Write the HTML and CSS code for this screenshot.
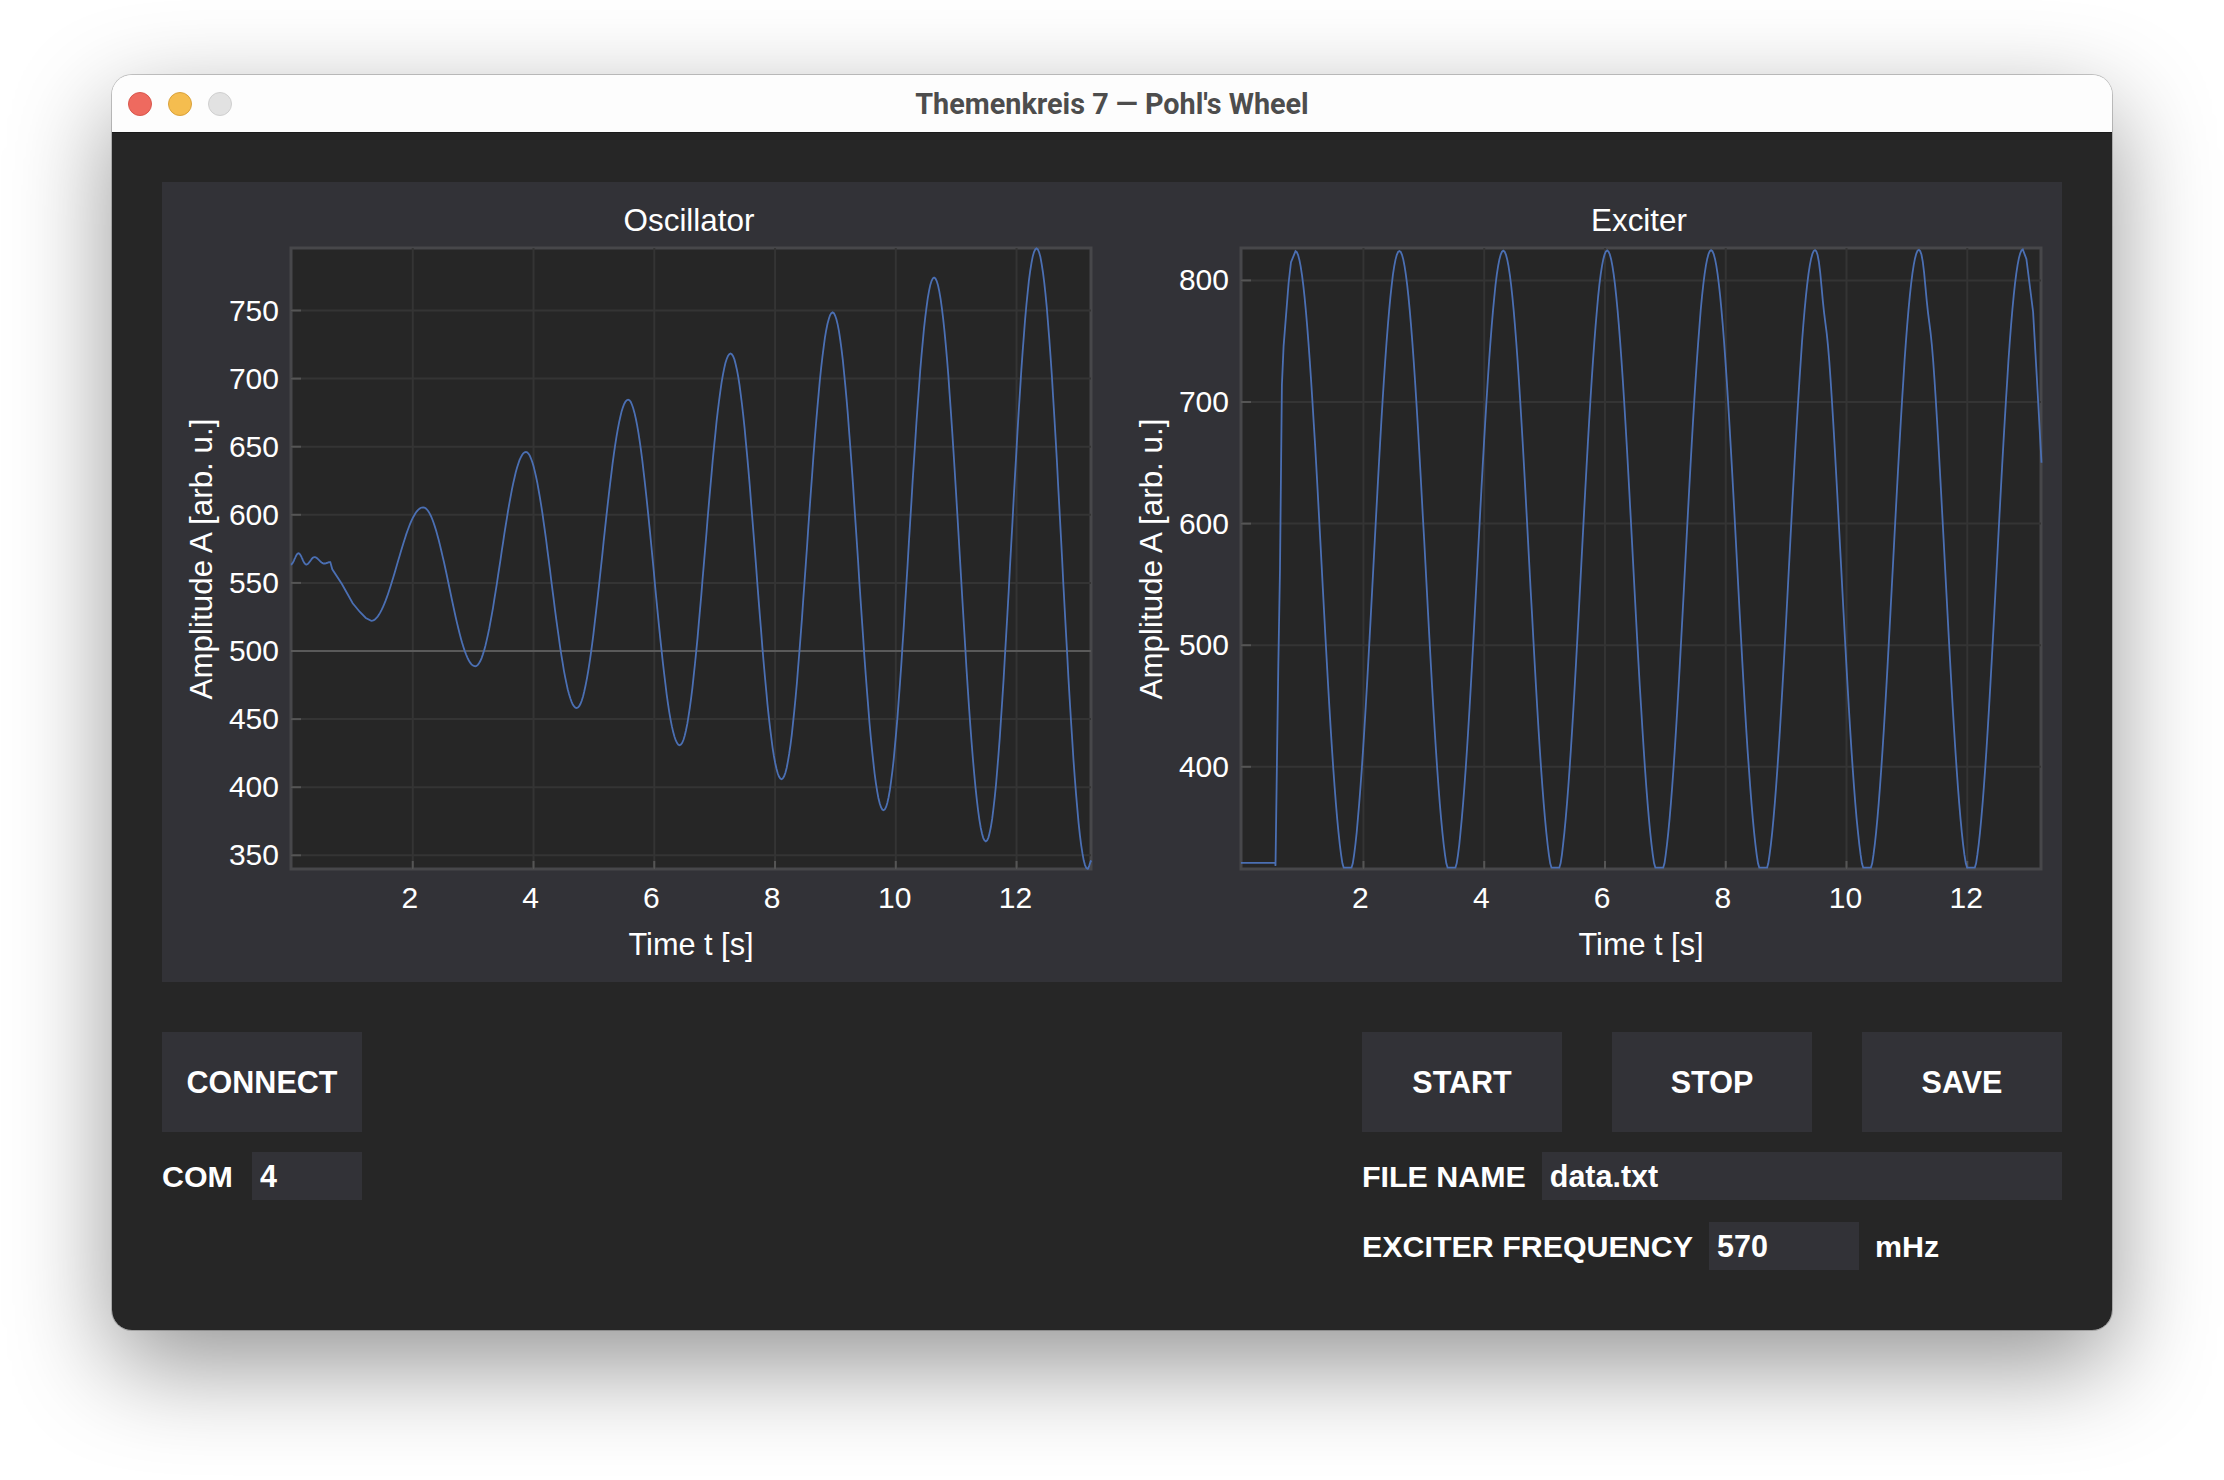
FILE: index.html
```html
<!DOCTYPE html>
<html lang="en">
<head>
  <meta charset="UTF-8">
  <title>Themenkreis 7 — Pohl's Wheel</title>
  <link rel="stylesheet" href="styles.css">
</head>
<body>
  <div class="window">
    <div class="titlebar">
      <div class="lights">
        <span class="light light-close"></span>
        <span class="light light-min"></span>
        <span class="light light-max"></span>
      </div>
      <div class="title">Themenkreis 7 — Pohl's Wheel</div>
    </div>
    <div class="content">
      <div class="panel">
        <svg class="chart" id="oscillator" width="950" height="800"></svg>
        <svg class="chart" id="exciter" width="950" height="800"></svg>
      </div>
      <div class="controls">
        <div class="col-left">
          <button class="btn">CONNECT</button>
          <div class="row">
            <label class="label">COM</label>
            <input class="field field-com" type="text" value="4">
          </div>
        </div>
        <div class="col-right">
          <div class="buttons">
            <button class="btn">START</button>
            <button class="btn">STOP</button>
            <button class="btn">SAVE</button>
          </div>
          <div class="row">
            <label class="label">FILE NAME</label>
            <input class="field field-file" type="text" value="data.txt">
          </div>
          <div class="row">
            <label class="label">EXCITER FREQUENCY</label>
            <input class="field field-freq" type="text" value="570">
            <span class="label">mHz</span>
          </div>
        </div>
      </div>
    </div>
  </div>
  <script src="chart.js"></script>
</body>
</html>
```

FILE: styles.css
```css
body {
  margin: 0;
  width: 2224px;
  height: 1480px;
  overflow: hidden;
  background: #fff;
  font-family: 'Liberation Sans', Arial, sans-serif;
  color: #fff;
}
.window {
  width: 2000px;
  height: 1255px;
  margin: 75px 0 0 112px;
  border-radius: 20px;
  overflow: hidden;
  display: flex;
  flex-direction: column;
  box-shadow: 0 0 0 1px rgba(0, 0, 0, 0.2), 0 35px 100px rgba(0, 0, 0, 0.42);
}
.titlebar {
  position: relative;
  height: 57px;
  background: #fdfdfd;
  border-bottom: 1px solid #1a1a1a;
  display: flex;
  align-items: center;
  justify-content: center;
  flex-shrink: 0;
}
.lights {
  position: absolute;
  left: 16px;
  top: 17px;
  display: flex;
  gap: 16px;
}
.light {
  width: 24px;
  height: 24px;
  border-radius: 50%;
  box-sizing: border-box;
  border: 1px solid;
}
.light-close {
  background: #ee6a5f;
  border-color: #d8574d;
}
.light-min {
  background: #f5bd4f;
  border-color: #d9a23c;
}
.light-max {
  background: #e2e2e2;
  border-color: #cfcfcf;
}
.title {
  font-family: Roboto, sans-serif;
  font-size: 28.8px;
  font-weight: 700;
  color: #4d4d4d;
}
.content {
  flex: 1;
  background: #262626;
  padding: 49px 50px 0;
}
.panel {
  display: flex;
  background: #323237;
  height: 800px;
}
.chart {
  display: block;
}
.chart text {
  fill: #fff;
  font-size: 30px;
}
.chart .chart-title,
.chart .axis-y {
  font-size: 31.4px;
}
.chart .axis-x {
  font-size: 30.7px;
}
.controls {
  display: flex;
  justify-content: space-between;
  margin-top: 50px;
}
.col-left {
  width: 200px;
}
.col-right {
  width: 700px;
}
.buttons {
  display: flex;
  justify-content: space-between;
}
.btn {
  width: 200px;
  height: 100px;
  padding: 0;
  border: none;
  background: #323237;
  color: #fff;
  font-family: inherit;
  font-size: 30.5px;
  font-weight: bold;
}
.row {
  display: flex;
  align-items: center;
  gap: 16px;
  margin-top: 20px;
}
.row + .row {
  margin-top: 22px;
}
.col-left .row {
  justify-content: space-between;
}
.label {
  font-size: 30.4px;
  font-weight: bold;
}
.field {
  height: 48px;
  box-sizing: border-box;
  padding: 0 8px;
  border: none;
  background: #323237;
  color: #fff;
  font-family: inherit;
  font-size: 30.5px;
  font-weight: bold;
}
.field-com {
  width: 110px;
}
.field-file {
  flex: 1;
  min-width: 0;
}
.field-freq {
  width: 150px;
}
.frame {
  fill: #262626;
  stroke: #47474a;
  stroke-width: 3;
}
.grid {
  stroke: #343434;
  stroke-width: 2;
}
.tick {
  stroke: #555;
  stroke-width: 2;
}
.level {
  stroke: #5a5a5a;
  stroke-width: 2;
}
.curve {
  fill: none;
  stroke: #4b6fb3;
  stroke-width: 1.8;
}
```

FILE: chart.js
```js
// plot boxes are in chart pixels, x/y ranges are in data units
const box = { left: 129, right: 929, top: 66, bottom: 687 };

// [t, A, 'l'] means a straight piece up to this point, otherwise half cosine
const oscData = [
  [-0.02, 563.5], [0.107, 571.7], [0.236, 563.5], [0.372, 568.9], [0.533, 564.2], [0.634, 565.3],
  [0.668, 560, 'l'], [0.826, 549.2, 'l'], [1.006, 535.1, 'l'], [1.124, 528.6, 'l'], [1.223, 524.2, 'l'],
  [1.313, 522.2, 'l'], [2.171, 605.5], [3.035, 488.8], [3.873, 646.1], [4.714, 458.1], [5.566, 684.5],
  [6.42, 430.8], [7.263, 718.4], [8.108, 405.9], [8.953, 748.6], [9.797, 383.1], [10.635, 774.2],
  [11.491, 360.3], [12.331, 795.6], [13.176, 340], [13.24, 346]
];

const excData = [
  [-0.03, 321, 'l'], [0.54, 321, 'l'], [0.544, 318.5, 'l'], [0.562, 383.4, 'l'], [0.59, 483, 'l'],
  [0.617, 562.7, 'l'], [0.649, 714, 'l'], [0.677, 746, 'l'], [0.761, 797.9, 'l'], [0.8, 815, 'l'], [0.875, 824, 'l']
];
for (let n = 0; n < 7; n++) {
  const peak = 0.875 + 1.7207 * n;
  if (n > 0) excData.push([peak, 824 + n * 0.2]);
  excData.push([peak + 0.862, 308]);
}
// last swing is cut off by the right edge
excData.push([12.92, 825.5], [12.98, 817.6, 'l'], [13.09, 774, 'l'], [13.15, 722, 'l'], [13.23, 650, 'l']);

const charts = [
  {
    id: 'oscillator', title: 'Oscillator', data: oscData,
    tx: 60.38, x0: 130, // pixel of t = 0
    ay: 1.362, a0: 750, y0: 128.5, // pixel of A = 750
    yTicks: [750, 700, 650, 600, 550, 500, 450, 400, 350],
    level: 500, floor: 340, tMax: 13.24, bumps: []
  },
  {
    id: 'exciter', title: 'Exciter', data: excData,
    tx: 60.38, x0: 130.7,
    ay: 1.216, a0: 800, y0: 98.4,
    yTicks: [800, 700, 600, 500, 400],
    floor: 317, tMax: 13.24,
    bumps: [[9.62, 14], [11.34, 14]] // small shoulders after the peaks
  }
];

const curvePoints = (c) => {
  const pts = [];
  for (let i = 1; i < c.data.length; i++) {
    const [t1, a1] = c.data[i - 1];
    const [t2, a2, straight] = c.data[i];
    const steps = straight ? 1 : 40;
    for (let s = 0; s < steps; s++) {
      const f = s / steps;
      const t = t1 + (t2 - t1) * f;
      const k = straight ? f : (1 - Math.cos(Math.PI * f)) / 2;
      let a = a1 + (a2 - a1) * k;
      c.bumps.forEach(([tc, d]) => {
        a -= d * Math.exp(-(((t - tc) / 0.06) ** 2));
      });
      if (t <= c.tMax) pts.push([t, Math.max(a, c.floor)]);
    }
  }
  const last = c.data[c.data.length - 1];
  pts.push([last[0], last[1]]);
  return pts;
};

const drawChart = (c) => {
  const px = (t) => c.x0 + t * c.tx;
  const py = (a) => c.y0 + (c.a0 - a) * c.ay;
  let out = `<rect class="frame" x="${box.left}" y="${box.top}" width="${box.right - box.left}" height="${box.bottom - box.top}"/>`;

  c.yTicks.forEach((a) => {
    const y = py(a);
    out += `<line class="grid" x1="${box.left}" x2="${box.right}" y1="${y}" y2="${y}"/>`;
    out += `<line class="tick" x1="${box.left}" x2="${box.left + 10}" y1="${y}" y2="${y}"/>`;
    out += `<text x="${box.left - 12}" y="${y + 10}" text-anchor="end">${a}</text>`;
  });

  [2, 4, 6, 8, 10, 12].forEach((t) => {
    const x = px(t);
    const shift = t < 10 ? -3 : -1;
    out += `<line class="grid" x1="${x}" x2="${x}" y1="${box.top}" y2="${box.bottom}"/>`;
    out += `<line class="tick" x1="${x}" x2="${x}" y1="${box.bottom - 8}" y2="${box.bottom}"/>`;
    out += `<text x="${x + shift}" y="726" text-anchor="middle">${t}</text>`;
  });

  if (c.level) {
    out += `<line class="level" x1="${box.left}" x2="${box.right}" y1="${py(c.level)}" y2="${py(c.level)}"/>`;
  }

  const line = curvePoints(c)
    .map(([t, a]) => `${px(t).toFixed(1)},${py(a).toFixed(1)}`)
    .join(' ');
  out += `<polyline class="curve" points="${line}"/>`;

  out += `<text class="chart-title" x="527" y="49" text-anchor="middle">${c.title}</text>`;
  out += `<text class="axis-x" x="529" y="773" text-anchor="middle">Time t [s]</text>`;
  out += `<text class="axis-y" transform="translate(50 377) rotate(-90)" text-anchor="middle">Amplitude A [arb. u.]</text>`;

  document.getElementById(c.id).innerHTML = out;
};

charts.forEach(drawChart);
```
